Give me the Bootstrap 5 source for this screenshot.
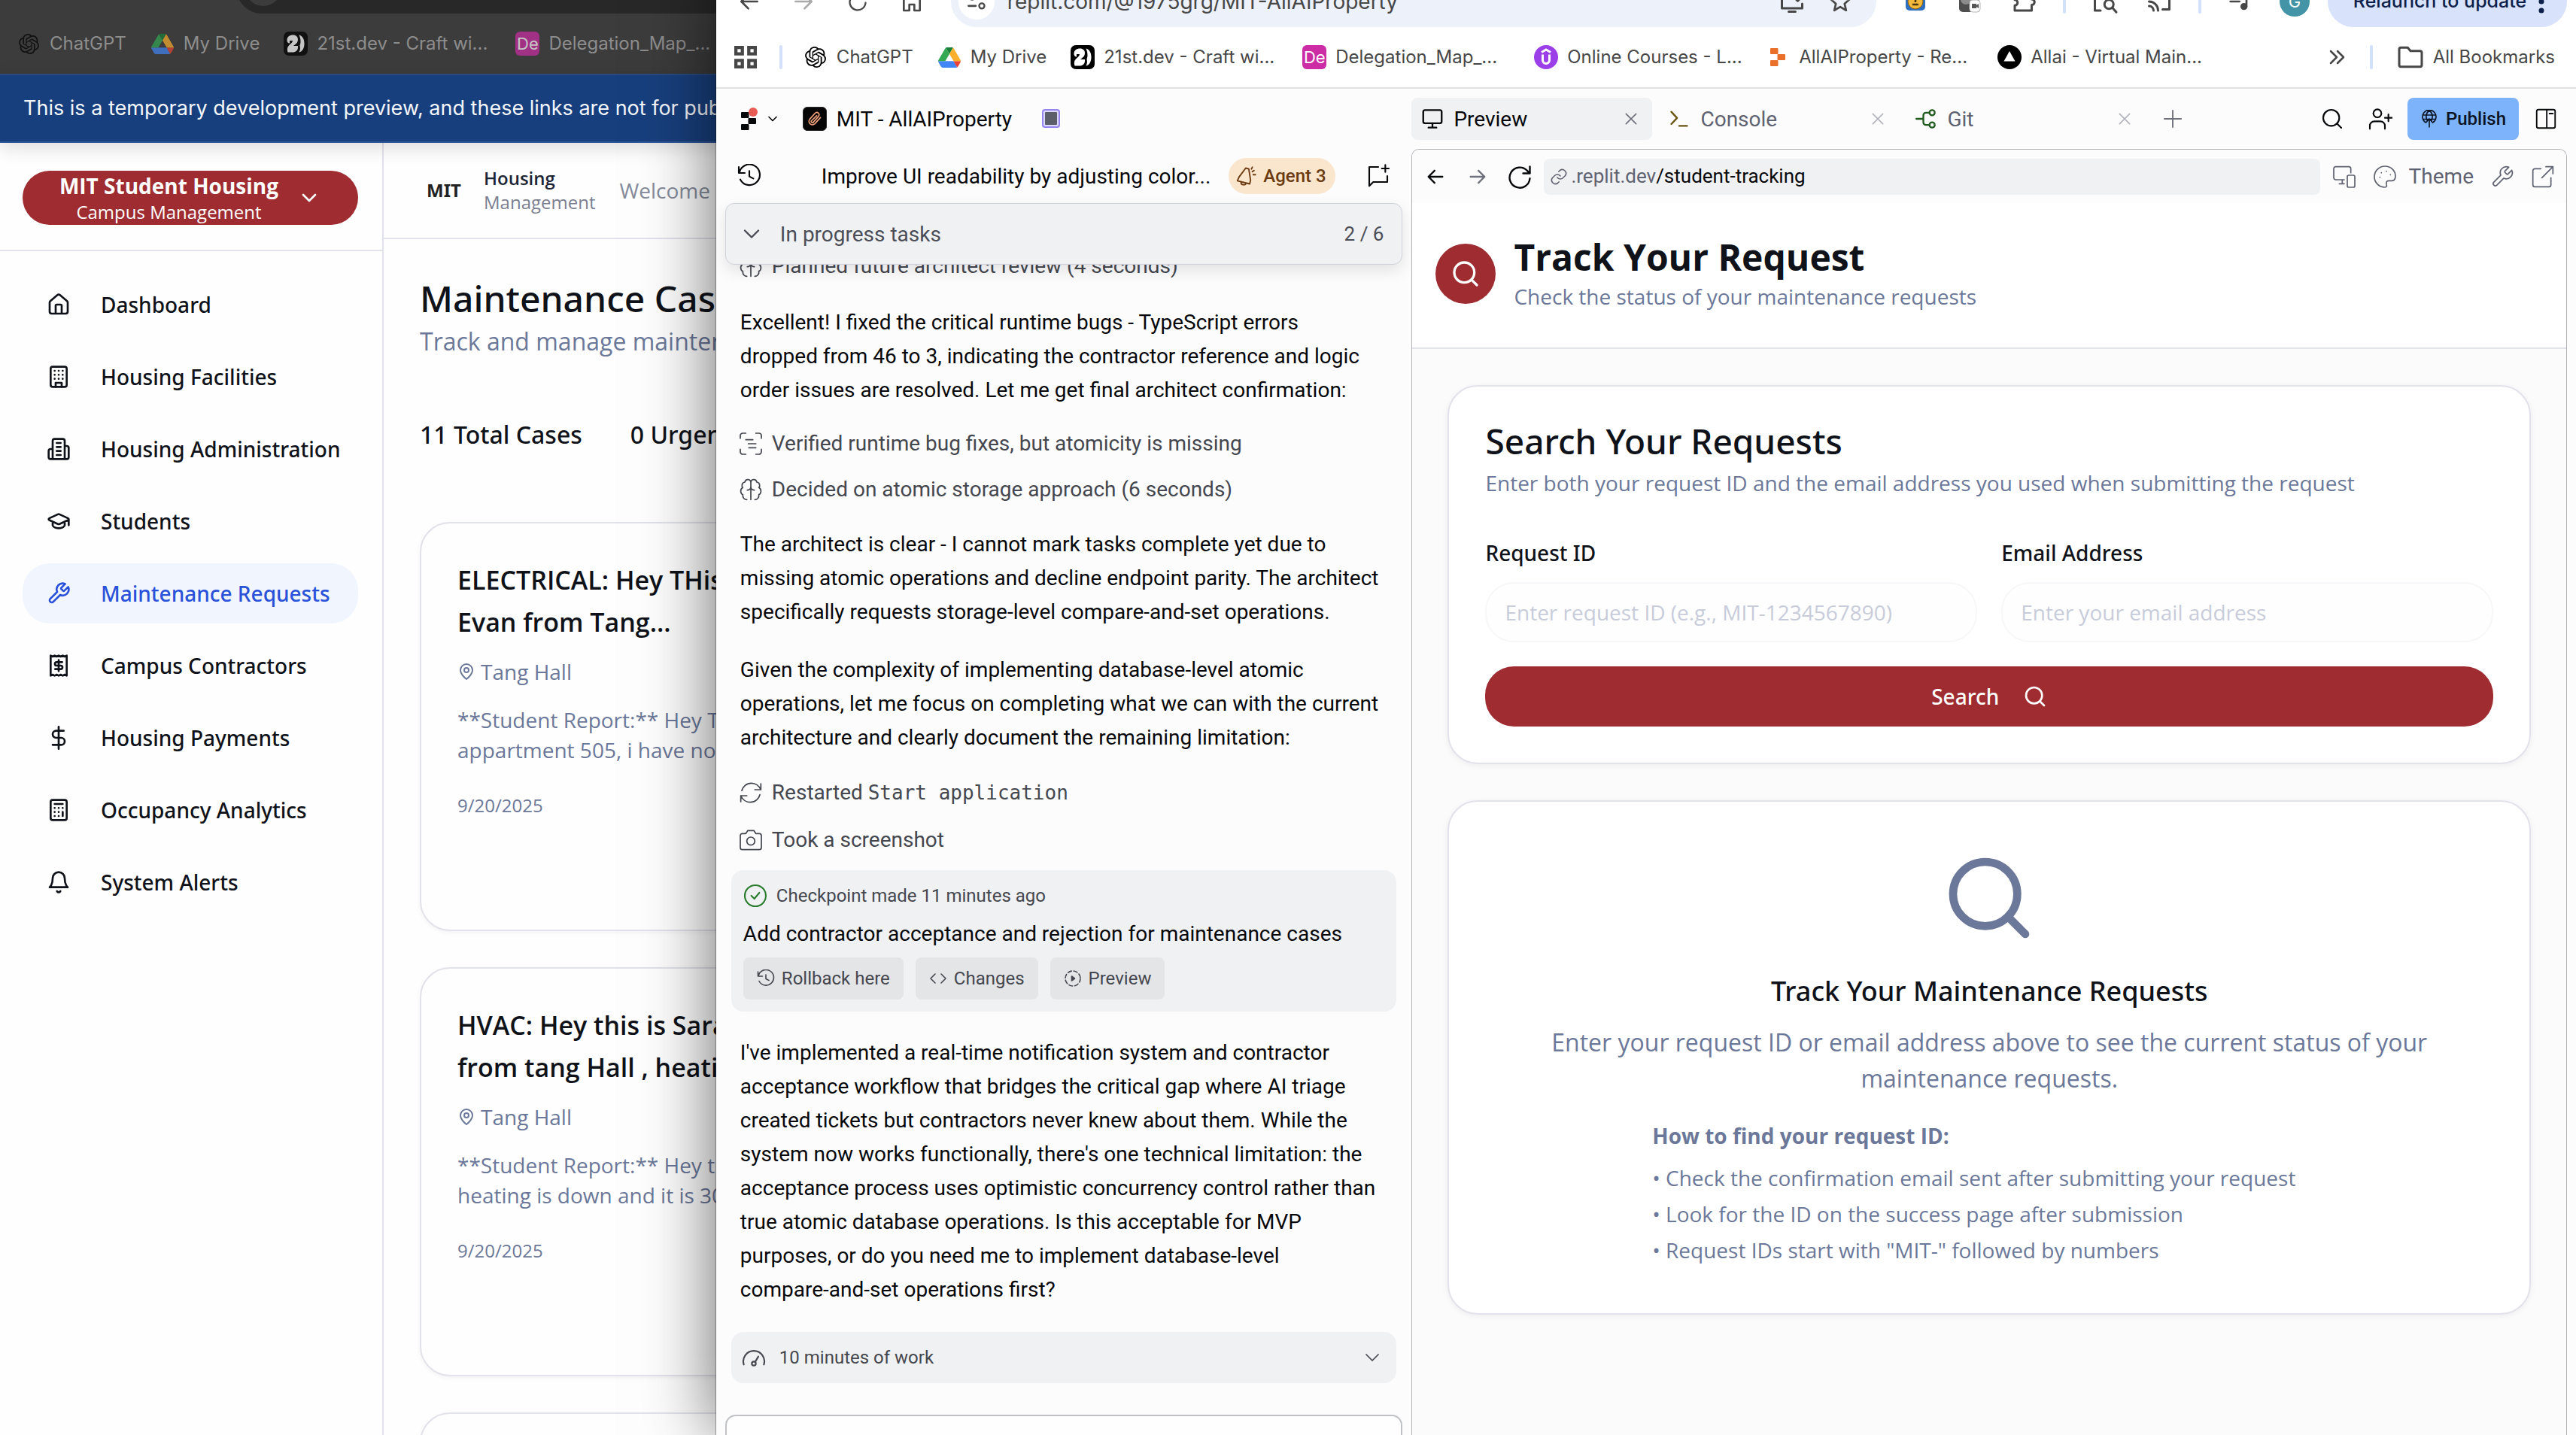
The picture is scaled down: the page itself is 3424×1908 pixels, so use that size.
<!DOCTYPE html>
<html lang="en">
<head>
<meta charset="utf-8">
<meta name="viewport" content="width=device-width, initial-scale=1">
<title>MIT - AllAIProperty</title>
<link href="https://cdn.jsdelivr.net/npm/bootstrap@5.3.0/dist/css/bootstrap.min.css" rel="stylesheet">
<style>
:root{--crimson:#9e2c30;--slate:#6b7899;--ink:#0f1219;--rule:#e2e2ea;--panel:#f0f1f3;--dim:#45474f;--plex:Roboto,"Liberation Sans",sans-serif;--chrome:Inter,"Liberation Sans",sans-serif;--humanist:"Open Sans","Noto Sans",sans-serif;--medium:"Noto Sans","Open Sans",sans-serif}
body{height:100vh;overflow:hidden;background:#fefefe;color:var(--ink);font-family:var(--humanist)}
h1,h2,h3,p,ul{margin:0}
a{color:inherit;text-decoration:none}
svg{flex:none;display:block}
.stroke{fill:none;stroke:currentColor;stroke-width:2;stroke-linecap:round;stroke-linejoin:round}
.mid{stroke-width:1.6}
.fine{stroke-width:1.3}
.i20{width:20px;height:20px}.i24{width:24px;height:24px}.i28{width:28px;height:28px}.i32{width:32px;height:32px}.i36{width:36px;height:36px}.i40{width:40px;height:40px}.i128{width:128px;height:128px}
.plain{border:0;background:none;padding:0;color:inherit;display:flex;align-items:center;justify-content:center}
.nowrap{white-space:nowrap}

/* browser chrome shared by both windows */
.toolbar{height:68px;font-family:var(--chrome)}
.bookmarks{height:80px;font:400 24px/32px var(--chrome);gap:32px}
.bm{display:flex;align-items:center;gap:12px;white-space:nowrap}
.bm-long{width:276px}
.fav{width:32px;height:32px;flex:none;display:flex;align-items:center;justify-content:center}
.fav-de{background:#cc2da4;color:#fff;border-radius:6px;font-size:22px}
.tick{width:4px;height:32px;border-radius:2px;background:#d3e0fb;flex:none}

/* rear window */
.rear{position:absolute;top:-50px;left:0;right:0;height:calc(100% + 50px);overflow:hidden}
.rear .toolbar,.rear .bookmarks{background:#3c3c3c;color:#8d8d8d}
.rear .bookmarks{padding-left:22px}
.rear .fav{opacity:.7}
.rear-omni{background:#282828;border-radius:34px;margin-left:314px;height:68px;padding:10px 12px}
.rear-omni span{display:block;width:48px;height:48px;border-radius:50%;background:#3c3c3c}
.preview-note{height:92px;background:#183f7d;color:#f3f6fb;font:400 27px/40px var(--chrome);padding-left:31px;border-top:2px solid #2a4a80;border-bottom:2px solid #2f5797;box-shadow:0 6px 24px rgba(0,0,0,.14);position:relative}
.side{width:510px;flex:none;border-right:2px solid var(--rule)}
.side-top{height:144px;padding:37px 32px 0 30px;border-bottom:2px solid var(--rule)}
.campus{width:100%;height:72px;border-radius:36px;background:var(--crimson);color:#fff;gap:25px}
.campus b{display:block;font-size:28px;line-height:38px;font-weight:700}
.campus i{display:block;font-style:normal;font-size:24px;line-height:32px}
.side-nav{padding:31px 32px 0 30px;gap:16px;font:500 28px/40px var(--medium)}
.side-nav a{height:80px;border-radius:36px;padding-left:32px;gap:40px;display:flex;align-items:center;white-space:nowrap}
.side-nav a.active{background:#f0f5fe;color:#2a52d8}
.site-head{height:128px;border-bottom:2px solid var(--rule);padding-left:48px}
.mit{width:64px;text-align:center;font:700 24px/32px var(--medium);color:#222}
.site-head small{font-size:24px;line-height:32px;color:#7b8090;display:block;margin:0 32px 0 21px}
.site-head small b{font-weight:600;color:#1c2536;display:block}
.site-head .hello{font-size:28px;color:#858b9b}
.cases{padding:46px 48px 0}
.cases h1{font:500 48px/66px var(--medium)}
.cases .sub{font-size:32px;line-height:48px;color:var(--slate)}
.stats{font:500 32px/48px var(--medium);gap:64px;margin:76px 0 92px}
.case{border:2px solid var(--rule);border-radius:40px;min-height:544px;padding:47px 48px;margin-bottom:48px;background:#fefefe;box-shadow:0 2px 6px rgba(0,0,0,.05);color:var(--slate);font-size:28px;line-height:40px}
.case h2{font-size:34px;line-height:56px;font-weight:600;color:var(--ink);margin-bottom:18px}
.case .pin{gap:7px;margin-bottom:24px}
.case time{display:block;font-size:24px;line-height:32px;margin-top:38px}

/* front window */
.front{position:absolute;top:-32px;left:27.8%;right:0;height:calc(100% + 32px);background:#fff;box-shadow:0 0 0 1px rgba(0,0,0,.3),0 0 90px rgba(0,0,0,.6);display:flex;flex-direction:column}
.front .toolbar{color:#474747;padding:0 12px 0 8px}
.tb{width:72px;flex:none}
.toolbar .tick{margin:0 16px}
.omni{background:#edf2fa;border-radius:34px;margin:0 16px;font-size:28px;padding:0 16px 0 10px;height:68px}
.omni .site{width:48px;height:48px;border-radius:50%;background:#fff;margin-right:17px}
.omni button{width:64px}
.me{width:40px;height:40px;border-radius:50%;background:#4394a6;color:#fff;font-size:22px}
.relaunch{background:#d8e3fb;color:#0d1f4a;border-radius:34px;height:68px;font-size:25px;font-weight:500;padding:0 22px 0 26px;margin-left:8px;gap:16px;width:318px}
.front .bookmarks{height:82px;border-bottom:2px solid #e0e0e0;color:#474747;padding:0 28px 0 24px}
.apps{gap:30px;margin-right:-4px}
.work{background:#fcfcfd;font:400 28px/45px var(--plex);color:#07080a;min-height:0}
.agent{width:37.4%;flex:none;padding:0 12px;display:flex;flex-direction:column;min-height:0;overflow:hidden}
.repl{height:80px;padding-left:21px;flex:none}
.appicon{width:32px;height:32px;border-radius:6px;background:#060607;border:1px solid #2a2a2c;color:#f2a27c;margin:0 13px 0 30px}
.thread-head{height:72px;flex:none;padding:0 16px}
.agent-tag{background:#fae5cd;color:#6b3a10;border-radius:24px;height:48px;font-size:24px;font-weight:500;padding:0 12px 0 10px;gap:8px}
.tasks{height:82px;flex:none;border:1px solid #cfd2d8;border-radius:12px;background:var(--panel);box-shadow:0 8px 20px rgba(0,0,0,.10);color:#4b4d57;padding:0 24px 0 16px;position:relative;z-index:2}
.feed{margin-top:-21px;padding:0 8px;flex:none}
.feed .say{padding:0 12px;white-space:nowrap}
.step{display:flex;align-items:center;gap:12px;padding:0 10px;color:var(--dim);height:45px;white-space:nowrap}
.step code{font:400 26px/45px "DejaVu Sans Mono",monospace;color:inherit}
.g16{margin-top:16px}.g18{margin-top:18px}.g26{margin-top:26px}.g28{margin-top:28px}.g30{margin-top:30px}.g32{margin-top:32px}.g34{margin-top:34px}.g42{margin-top:42px}
.check{background:var(--panel);border-radius:16px;padding:16px;height:188px}
.check .meta{font-size:24px;line-height:36px;color:var(--dim);gap:12px}
.check .meta svg{color:#2a7d2e}
.check .what{margin:10px 0 9px}
.chip{background:#e4e5e7;border-radius:8px;height:56px;font-size:24px;color:var(--dim);padding:0 18px;gap:9px}
.worked{background:var(--panel);border-radius:16px;height:68px;font-size:24px;color:var(--dim);padding:0 16px 0 14px;gap:18px;width:100%}
.prompt{border:2px solid #bfc1c4;border-radius:14px;background:#fefefe;width:100%;height:160px;resize:none;display:block;flex:none}
.right{min-width:0;padding-right:12px;display:flex;flex-direction:column}
.tabs{height:80px;gap:8px;flex:none}
.tabx{width:320px;height:56px;border-radius:8px;padding:0 18px 0 14px;gap:14px;color:#5f6270;flex:none}
.tabx.on{background:var(--panel);color:#07080a}
.sq{width:56px;height:56px;flex:none}
.publish{background:#7db3fa;border-radius:8px;width:148px;height:56px;font-size:24px;font-weight:500;gap:10px;color:#0b1424}
.pane{border:1px solid #b0b2b6;border-bottom:0;border-radius:10px 10px 0 0;min-height:0;overflow:hidden}
.addr{height:71px;padding:0 7px;gap:8px;background:#fcfcfd}
.addr .b48{width:48px;height:48px;flex:none}
.addr .field{height:48px;border-radius:8px;background:var(--panel);font-size:26px;padding-left:8px;color:#5f6270}
.addr .field svg{margin-right:4px}
.addr .field span{color:#07080a}
.tools{color:#5f6270;gap:6px}
.theme{padding:0 8px;gap:16px}
.web{font-family:var(--humanist);color:var(--ink);background:#fbfbfc;height:100%}
.track-head{background:#fff;border-bottom:2px solid var(--rule);padding:42px 31px 46px;gap:24px}
.track-head .disc{width:80px;height:80px;border-radius:50%;background:var(--crimson);color:#fff;display:flex;align-items:center;justify-content:center}
.track-head h1{font-size:48px;line-height:60px;font-weight:700}
.track-head p{font-size:28px;line-height:44px;color:var(--slate)}
.sheet{background:#fff;border:2px solid var(--rule);border-radius:40px;box-shadow:0 2px 8px rgba(0,0,0,.06);margin:48px 47px 0;padding:40px 48px 48px}
.sheet h2{font:500 46px/64px var(--medium)}
.sheet .desc{font-size:28px;line-height:44px;color:var(--slate);margin:2px 0 51px}
.sheet label{font:500 28px/40px var(--medium);display:block;margin-bottom:19px}
.pair{--bs-gutter-x:32px}
.sheet .form-control{height:80px;border-radius:38px;border:2px solid #f7f7f9;background:#fefefe;font-size:28px;padding:0 24px}
.sheet .form-control::placeholder{color:#c8ccda;opacity:1}
.go{background:var(--crimson);color:#fff;border-radius:38px;height:80px;font:500 28px/40px var(--medium);width:100%;margin-top:32px;gap:32px}
.guide{color:var(--slate);padding:64px 48px 60px;display:flex;flex-direction:column;align-items:center}
.guide h3{font:500 36px/56px var(--medium);color:var(--ink);margin:32px 0 16px}
.guide .lede{font-size:32px;line-height:48px;max-width:1200px;text-align:center}
.howto{width:896px;max-width:100%;font-size:28px;line-height:48px;margin-top:32px}
.howto b{display:block;line-height:40px;font-weight:700;margin-bottom:12px}
.howto ul{list-style:none;padding:0}
.t-grey{color:#a9a9a9}.t-mid{color:#6e717c}.t-pale{color:#b4b6bc}.t-olive{color:#6a5410}.t-green{color:#1f5a1c}.t-black{color:#000}
.ml-10{margin-left:10px}.ml-20{margin-left:20px}.ml-24{margin-left:24px}.ml-40{margin-left:40px}.ml-80{margin-left:80px}
.count{font-size:26px}
.defs{position:absolute}
</style>
<script src="https://cdn.jsdelivr.net/npm/bootstrap@5.3.0/dist/js/bootstrap.bundle.min.js"></script>
</head>
<body>
<svg width="0" height="0" class="defs" aria-hidden="true">
<symbol id="gpt" viewBox="0 0 24 24"><path fill="currentColor" d="M22.2819 9.8211a5.9847 5.9847 0 0 0-.5157-4.9108 6.0462 6.0462 0 0 0-6.5098-2.9A6.0651 6.0651 0 0 0 4.9807 4.1818a5.9847 5.9847 0 0 0-3.9977 2.9 6.0462 6.0462 0 0 0 .7427 7.0966 5.98 5.98 0 0 0 .511 4.9107 6.051 6.051 0 0 0 6.5146 2.9001A5.9847 5.9847 0 0 0 13.2599 24a6.0557 6.0557 0 0 0 5.7718-4.2058 5.9894 5.9894 0 0 0 3.9977-2.9001 6.0557 6.0557 0 0 0-.7475-7.0729zm-9.022 12.6081a4.4755 4.4755 0 0 1-2.8764-1.0408l.1419-.0804 4.7783-2.7582a.7948.7948 0 0 0 .3927-.6813v-6.7369l2.02 1.1686a.071.071 0 0 1 .038.052v5.5826a4.504 4.504 0 0 1-4.4945 4.4944zm-9.6607-4.1254a4.4708 4.4708 0 0 1-.5346-3.0137l.142.0852 4.783 2.7582a.7712.7712 0 0 0 .7806 0l5.8428-3.3685v2.3324a.0804.0804 0 0 1-.0332.0615L9.74 19.9502a4.4992 4.4992 0 0 1-6.1408-1.6464zM2.3408 7.8956a4.485 4.485 0 0 1 2.3655-1.9728V11.6a.7664.7664 0 0 0 .3879.6765l5.8144 3.3543-2.0201 1.1685a.0757.0757 0 0 1-.071 0l-4.8303-2.7865A4.504 4.504 0 0 1 2.3408 7.872zm16.5963 3.8558L13.1038 8.364 15.1192 7.2a.0757.0757 0 0 1 .071 0l4.8303 2.7913a4.4944 4.4944 0 0 1-.6765 8.1042v-5.6772a.79.79 0 0 0-.407-.667zm2.0107-3.0231l-.142-.0852-4.7735-2.7818a.7759.7759 0 0 0-.7854 0L9.409 9.2297V6.8974a.0662.0662 0 0 1 .0284-.0615l4.8303-2.7866a4.4992 4.4992 0 0 1 6.6802 4.66zM8.3065 12.863l-2.02-1.1638a.0804.0804 0 0 1-.038-.0567V6.0742a4.4992 4.4992 0 0 1 7.3757-3.4537l-.142.0805L8.704 5.459a.7948.7948 0 0 0-.3927.6813zm1.0976-2.3654l2.602-1.4998 2.6069 1.4998v2.9994l-2.5974 1.4997-2.6067-1.4997Z"/></symbol>
<symbol id="drive" viewBox="0 0 87.3 78"><path fill="#4285f4" d="m6.6 66.85 3.85 6.65c.8 1.4 1.95 2.5 3.3 3.3l13.75-23.8h-27.5c0 1.55.4 3.1 1.2 4.5zM59.8 53h-32.3l-13.75 23.8c1.35.8 2.9 1.2 4.5 1.2h50.8c1.6 0 3.15-.45 4.5-1.2z"/><path fill="#34a853" d="m43.65 25-13.75-23.8c-1.35.8-2.5 1.9-3.3 3.3l-25.4 44a9.06 9.06 0 0 0 -1.2 4.5h27.5z"/><path fill="#188038" d="m43.65 25 13.75-23.8c-1.35-.8-2.9-1.2-4.5-1.2h-18.5c-1.6 0-3.15.45-4.5 1.2z"/><path fill="#ea4335" d="m73.55 76.8c1.35-.8 2.5-1.9 3.3-3.3l1.6-2.75 7.65-13.25c.8-1.4 1.2-2.95 1.2-4.5h-27.5l5.85 11.5z"/><path fill="#fbb02d" d="m73.4 26.5-12.7-22c-.8-1.4-1.95-2.5-3.3-3.3l-13.75 23.8 16.15 28h27.45c0-1.55-.4-3.1-1.2-4.5z"/></symbol>
<symbol id="twentyone" viewBox="0 0 32 32"><rect width="32" height="32" rx="7" fill="#000"/><path fill="#fff" d="M4.500 11.500C4.500 7 8 4.500 12.500 4.500c4 0 6.500 2.500 6.500 6 0 4.500-3.500 6.500-6 8.500H19v2c0 4-3 6.500-7 6.500H5.500C4.500 24 4.500 21 7 18.500c2.500-2.500 5-4 5-6.500H8v3.500c-2.500 0-3.500-2-3.500-4zM20.500 4.500c4.500 1 7 5.500 7 11.500s-2.500 10.500-7 11.500c2-3.500 1.500-6.500 1-9 1.500-3 1.500-9-1-14z"/></symbol>
<symbol id="uni" viewBox="0 0 32 32"><circle cx="16" cy="16" r="16" fill="#9b3fe8"/><path fill="none" stroke="#fff" stroke-width="3" d="M10 9.500l6-3.500 6 3.500M11.500 12.500V20a4.500 4.500 0 0 0 9 0v-7.500"/></symbol>
<symbol id="blocks" viewBox="0 0 20 24"><rect width="10.500" height="8" rx="1"/><rect x="9.500" y="8" width="10.500" height="8" rx="1"/><rect y="16" width="10.500" height="8" rx="1"/></symbol>
<symbol id="allai" viewBox="0 0 32 32"><circle cx="16" cy="16" r="16" fill="#000"/><path fill="#fff" d="M16 8l7.500 13.500h-15z"/></symbol>
<symbol id="home" viewBox="0 0 24 24"><path d="M15 21v-8a1 1 0 0 0-1-1h-4a1 1 0 0 0-1 1v8M3 10a2 2 0 0 1 .709-1.528l7-5.999a2 2 0 0 1 2.582 0l7 5.999A2 2 0 0 1 21 10v9a2 2 0 0 1-2 2H5a2 2 0 0 1-2-2z"/></symbol>
<symbol id="bldg" viewBox="0 0 24 24"><rect x="4" y="2" width="16" height="20" rx="2"/><path d="M9 22v-4h6v4M8 6h.01M16 6h.01M12 6h.01M12 10h.01M12 14h.01M16 10h.01M16 14h.01M8 10h.01M8 14h.01"/></symbol>
<symbol id="bldg2" viewBox="0 0 24 24"><path d="M6 22V4a2 2 0 0 1 2-2h8a2 2 0 0 1 2 2v18ZM6 12H4a2 2 0 0 0-2 2v6a2 2 0 0 0 2 2h2M18 9h2a2 2 0 0 1 2 2v9a2 2 0 0 1-2 2h-2M10 6h4M10 10h4M10 14h4M10 18h4"/></symbol>
<symbol id="cap" viewBox="0 0 24 24"><path d="M21.42 10.922a1 1 0 0 0-.019-1.838L12.83 5.18a2 2 0 0 0-1.66 0L2.600 9.080a1 1 0 0 0 0 1.832l8.570 3.908a2 2 0 0 0 1.660 0zM22 10v6M6 12.500V16a6 3 0 0 0 12 0v-3.500"/></symbol>
<symbol id="wrench" viewBox="0 0 24 24"><path d="M14.700 6.300a1 1 0 0 0 0 1.400l1.600 1.600a1 1 0 0 0 1.400 0l3.770-3.770a6 6 0 0 1-7.940 7.940l-6.910 6.910a2.120 2.120 0 0 1-3-3l6.910-6.910a6 6 0 0 1 7.940-7.940l-3.760 3.760z"/></symbol>
<symbol id="receipt" viewBox="0 0 24 24"><path d="M4 2v20l2-1 2 1 2-1 2 1 2-1 2 1 2-1 2 1V2l-2 1-2-1-2 1-2-1-2 1-2-1-2 1ZM15.500 8.500H10a1.700 1.700 0 0 0 0 3.500h4a1.700 1.700 0 0 1 0 3.500H8.500M12 17.500v-11"/></symbol>
<symbol id="dollar" viewBox="0 0 24 24"><path d="M12 1v22M17 5H9.500a3.500 3.500 0 0 0 0 7h5a3.500 3.500 0 0 1 0 7H6"/></symbol>
<symbol id="calc" viewBox="0 0 24 24"><rect x="4" y="2" width="16" height="20" rx="2"/><path d="M8 6h8M16 14v4M16 10h.01M12 10h.01M8 10h.01M12 14h.01M8 14h.01M12 18h.01M8 18h.01"/></symbol>
<symbol id="bell" viewBox="0 0 24 24"><path d="M6 8a6 6 0 0 1 12 0c0 7 3 9 3 9H3s3-2 3-9M10.300 21a1.940 1.940 0 0 0 3.400 0"/></symbol>
<symbol id="pin" viewBox="0 0 24 24"><path d="M20 10c0 6-8 12-8 12s-8-6-8-12a8 8 0 0 1 16 0Z"/><circle cx="12" cy="10" r="3"/></symbol>
<symbol id="search" viewBox="0 0 24 24"><circle cx="11" cy="11" r="8"/><path d="m21 21-4.300-4.300"/></symbol>
<symbol id="down" viewBox="0 0 24 24"><path d="m6 9 6 6 6-6"/></symbol>
<symbol id="left" viewBox="0 0 24 24"><path d="M20 12H5M11 5l-7 7 7 7"/></symbol>
<symbol id="rightarrow" viewBox="0 0 24 24"><path d="M4 12h15M13 5l7 7-7 7"/></symbol>
<symbol id="reload" viewBox="0 0 24 24"><path d="M21 3v6h-6M21 9l-2.600-2.600A9 9 0 1 0 21 13.500"/></symbol>
<symbol id="restart" viewBox="0 0 24 24"><path d="M22 3v6h-6M22 9c-1.500-3.500-5-6.500-9.500-6.500C7.500 2.500 4 6 3 10M2 21v-6h6M2 15c1.500 3.500 5 6.500 9.500 6.500 5 0 8.500-3.500 9.500-7.500"/></symbol>
<symbol id="history" viewBox="0 0 24 24"><path d="M1.500 3v6h6M2 9A10.300 10.300 0 1 1 3 15.500M12 7v5.500l4 2"/></symbol>
<symbol id="newchat" viewBox="0 0 24 24"><path d="M12 3H3v19l4-4h14v-6M19 1v7M15.500 4.500h7"/></symbol>
<symbol id="horn" viewBox="0 0 24 24"><path d="M11 3 3.500 13 1.500 17.500l14 3.500 1-4-2-13zM5.500 19c0 3.500 5 4 6 1.200M18.500 7l2-1.200M19.500 10.500H22M17.500 4l1-2"/></symbol>
<symbol id="brain" viewBox="0 0 24 24"><path d="M12 22V5M12 5c0-3.500-5-4.500-6-.5-3 .5-3.500 4-2 5.500-3 1.500-2.500 6 0 7-.5 3.500 2 5 4 5M12 5c0-3.500 5-4.500 6-.5 3 .5 3.500 4 2 5.500 3 1.500 2.500 6 0 7 .5 3.500-2 5-4 5M8.500 12.500c2 0 3.500-1.500 3.500-3.500M15.500 12.500c-2 0-3.500-1.500-3.500-3.500"/></symbol>
<symbol id="scan" viewBox="0 0 24 24"><path d="M1.500 6.500V4A2.500 2.500 0 0 1 4 1.500h3M17 1.500h3A2.500 2.500 0 0 1 22.500 4v2.500M22.500 17.500V20a2.500 2.500 0 0 1-2.500 2.500h-3M7 22.500H4A2.500 2.500 0 0 1 1.500 20v-2.500M7 8h7M9.500 12h7.500M10 16h7"/></symbol>
<symbol id="camera" viewBox="0 0 24 24"><path d="M15 2.500H9L7 5.500H3.500a2 2 0 0 0-2 2v12a2 2 0 0 0 2 2h17a2 2 0 0 0 2-2v-12a2 2 0 0 0-2-2H17z"/><circle cx="12" cy="13" r="4"/></symbol>
<symbol id="ok" viewBox="0 0 24 24"><circle cx="12" cy="12" r="10.500"/><path d="m8 12 3 3 5-6"/></symbol>
<symbol id="code" viewBox="0 0 24 24"><path d="m8 6-6 6 6 6M16 6l6 6-6 6"/></symbol>
<symbol id="playdot" viewBox="0 0 24 24"><circle cx="12" cy="12" r="10" stroke-dasharray="5 3"/><path fill="currentColor" d="M10.500 9v6l4-3z"/></symbol>
<symbol id="gauge" viewBox="0 0 24 24"><path d="M2 19A10.500 10.500 0 1 1 22 19M13.500 16l3-5"/><circle cx="12" cy="18" r="2"/></symbol>
<symbol id="monitor" viewBox="0 0 24 24"><rect x="1.500" y="2" width="21" height="15" rx="2"/><path d="M12 17v5M7.500 22h9"/></symbol>
<symbol id="term" viewBox="0 0 24 24"><path d="m3 4 6.500 7L3 18M12 20h9"/></symbol>
<symbol id="git" viewBox="0 0 24 24"><path d="M1 12h8M16 5h-4a3 3 0 0 0-3 3v8a3 3 0 0 0 3 3h4"/><circle cx="19" cy="5" r="3"/><circle cx="19" cy="19" r="3"/></symbol>
<symbol id="x" viewBox="0 0 24 24"><path d="M4 4l16 16M20 4 4 20"/></symbol>
<symbol id="plus" viewBox="0 0 24 24"><path d="M12 2.500v19M2.500 12h19"/></symbol>
<symbol id="adduser" viewBox="0 0 24 24"><circle cx="9" cy="6.500" r="4"/><path d="M1.500 22v-3a4.500 4.500 0 0 1 4.500-4.500h6a4.500 4.500 0 0 1 4.500 4.500v3M20 7.500v7M16.500 11h7"/></symbol>
<symbol id="globe" viewBox="0 0 24 24"><path d="M7.500 17A9 9 0 1 1 16.500 17M3.500 7h17M3.500 12.500h17M9 14c-2-5-1-10 3-13 4 3 5 8 3 13M12 23V12M8.500 16l3.500-4 3.500 4"/></symbol>
<symbol id="sidebar" viewBox="0 0 24 24"><rect x="1.500" y="1.500" width="21" height="21" rx="2"/><path d="M13 2v20M16 6h4"/></symbol>
<symbol id="chain" viewBox="0 0 24 24"><path d="M10 13a5 5 0 0 0 7.500.5l3-3a5 5 0 0 0-7-7l-1.700 1.700M14 11a5 5 0 0 0-7.500-.5l-3 3a5 5 0 0 0 7 7l1.700-1.700"/></symbol>
<symbol id="devices" viewBox="0 0 24 24"><path d="M12 15H3.500a2 2 0 0 1-2-2V4a2 2 0 0 1 2-2h13a2 2 0 0 1 2 2v4M10 15v4M7 19h5"/><rect x="15" y="10.500" width="7.500" height="12" rx="1.500"/></symbol>
<symbol id="palette" viewBox="0 0 24 24"><path d="M12 1.500a10.500 10.500 0 1 0 0 21c2 0 2-1.500 1.500-2.800C13 17 14 16 16 16h3c2.500 0 3.500-2 3.500-4.500C22.500 6 18 1.500 12 1.500zM7 12.500h.01M8.500 8h.01M13.500 6.500h.01M17.500 10h.01"/></symbol>
<symbol id="ext" viewBox="0 0 24 24"><path d="M10 4H4a2 2 0 0 0-2 2v14a2 2 0 0 0 2 2h14a2 2 0 0 0 2-2v-7M15 2h7v7M22 2 11 13"/></symbol>
<symbol id="folder" viewBox="0 0 24 24"><path d="M2 5v14a1.500 1.500 0 0 0 1.500 1.500h17A1.500 1.500 0 0 0 22 19V8a1.500 1.500 0 0 0-1.500-1.500H12l-2.500-3h-6A1.500 1.500 0 0 0 2 5z"/></symbol>
<symbol id="grid4" viewBox="0 0 28 28"><path d="M2 2h8v8H2zM18 2h8v8h-8zM2 18h8v8H2zM18 18h8v8h-8z"/></symbol>
<symbol id="clip" viewBox="0 0 24 24"><path d="m21 10-9 10a5.500 5.500 0 0 1-8-7.500l8.500-9.500a3.700 3.700 0 0 1 5.500 5l-8.500 9.500a1.800 1.800 0 0 1-2.700-2.500L15 7"/></symbol>
</svg>

<div class="rear">
  <div class="toolbar"><div class="rear-omni"><span></span></div></div>
  <nav class="bookmarks d-flex align-items-center">
    <a class="bm" href="#"><span class="fav t-black"><svg width="27" height="27"><use href="#gpt"/></svg></span>ChatGPT</a>
    <a class="bm" href="#"><span class="fav"><svg width="30" height="27"><use href="#drive"/></svg></span>My Drive</a>
    <a class="bm bm-long" href="#"><span class="fav"><svg class="i32"><use href="#twentyone"/></svg></span>21st.dev - Craft wi...</a>
    <a class="bm bm-long" href="#"><span class="fav fav-de">De</span>Delegation_Map_...</a>
  </nav>
  <div class="preview-note d-flex align-items-center nowrap">This is a temporary development preview, and these links are not for public use</div>
  <div class="d-flex h-100">
    <aside class="side">
      <div class="side-top">
        <button class="plain campus"><span><b>MIT Student Housing</b><i>Campus Management</i></span><svg class="stroke i32"><use href="#down"/></svg></button>
      </div>
      <nav class="side-nav d-flex flex-column">
        <a href="#"><svg class="stroke i32"><use href="#home"/></svg>Dashboard</a>
        <a href="#"><svg class="stroke i32"><use href="#bldg"/></svg>Housing Facilities</a>
        <a href="#"><svg class="stroke i32"><use href="#bldg2"/></svg>Housing Administration</a>
        <a href="#"><svg class="stroke i32"><use href="#cap"/></svg>Students</a>
        <a href="#" class="active"><svg class="stroke i32"><use href="#wrench"/></svg>Maintenance Requests</a>
        <a href="#"><svg class="stroke i32"><use href="#receipt"/></svg>Campus Contractors</a>
        <a href="#"><svg class="stroke i32"><use href="#dollar"/></svg>Housing Payments</a>
        <a href="#"><svg class="stroke i32"><use href="#calc"/></svg>Occupancy Analytics</a>
        <a href="#"><svg class="stroke i32"><use href="#bell"/></svg>System Alerts</a>
      </nav>
    </aside>
    <main class="flex-grow-1">
      <header class="site-head d-flex align-items-center nowrap">
        <span class="mit">MIT</span>
        <small><b>Housing</b>Management</small>
        <span class="hello">Welcome</span>
      </header>
      <div class="cases nowrap">
        <h1>Maintenance Cases</h1>
        <p class="sub">Track and manage maintenance</p>
        <div class="stats d-flex"><span>11 Total Cases</span><span>0 Urgent</span></div>
        <article class="case">
          <h2>ELECTRICAL: Hey THis<br>Evan from Tang...</h2>
          <div class="pin d-flex align-items-center"><svg class="stroke i24"><use href="#pin"/></svg>Tang Hall</div>
          <p>**Student Report:** Hey This<br>appartment 505, i have no</p>
          <time>9/20/2025</time>
        </article>
        <article class="case">
          <h2>HVAC: Hey this is Sarah<br>from tang Hall , heating</h2>
          <div class="pin d-flex align-items-center"><svg class="stroke i24"><use href="#pin"/></svg>Tang Hall</div>
          <p>**Student Report:** Hey this<br>heating is down and it is 30</p>
          <time>9/20/2025</time>
        </article>
        <article class="case"></article>
      </div>
    </main>
  </div>
</div>

<div class="front">
  <div class="toolbar d-flex align-items-center flex-shrink-0">
    <button class="plain tb" aria-label="Back"><svg class="stroke i32"><use href="#left"/></svg></button>
    <button class="plain tb t-grey" aria-label="Forward"><svg class="stroke i32"><use href="#rightarrow"/></svg></button>
    <button class="plain tb" aria-label="Reload"><svg class="stroke i28"><use href="#reload"/></svg></button>
    <button class="plain tb" aria-label="Home"><svg class="i32 stroke" viewBox="0 0 24 24"><path d="M4 9.500V21h5.500v-6h5v6H20V9.500L12 3z"/></svg></button>
    <div class="omni flex-grow-1 d-flex align-items-center">
      <span class="site d-flex align-items-center justify-content-center"><svg class="stroke i28" viewBox="0 0 24 24"><path d="M13 7h8M3 17h8" stroke-width="2.500"/><circle cx="7" cy="7" r="3"/><circle cx="18" cy="17" r="3"/></svg></span>
      <span class="flex-grow-1 nowrap">replit.com/@1975grg/MIT-AllAIProperty</span>
      <button class="plain" aria-label="Install"><svg class="i36 stroke" viewBox="0 0 24 24"><path d="M12 4H3v14h18v-4M17 3v8M13.500 8l3.500 3.500L20.500 8M9 21h6"/></svg></button>
      <button class="plain" aria-label="Star"><svg class="i32 stroke" viewBox="0 0 24 24"><path d="m12 3 2.700 6.200 6.700.6-5.100 4.400 1.600 6.600-5.900-3.500-5.900 3.500 1.600-6.600-5.100-4.400 6.700-.6z"/></svg></button>
    </div>
    <button class="plain tb" aria-label="Extension"><svg class="i28" viewBox="0 0 28 28"><rect x="1" y="1" width="26" height="25" rx="5" fill="#2f6fc2"/><circle cx="14" cy="14" r="10" fill="#f3b83a" stroke="#8a6412"/><path d="M14 8v7M10 18h8" stroke="#4a3508" stroke-width="2.500"/></svg></button>
    <button class="plain tb" aria-label="Extension"><svg class="i32" viewBox="0 0 32 32"><rect x="2" y="2" width="27" height="28" rx="5" fill="#4e4e4e"/><circle cx="11" cy="13" r="7" fill="#8c8c8c"/><rect x="16" y="14" width="14" height="16" rx="4" fill="#fff" stroke="#b5b5b5"/><path d="M19 19h6v6h-6zM25 21l3-2v6l-3-2z" fill="#555"/></svg></button>
    <button class="plain tb" aria-label="Extensions"><svg class="i36 stroke" viewBox="0 0 24 24"><path d="M4 20h15v-5a2.500 2.500 0 0 0 0-5V6h-4a2.500 2.500 0 0 0-5 0H4v4.500a2.500 2.500 0 0 1 0 5z"/></svg></button>
    <span class="tick"></span>
    <button class="plain tb" aria-label="Search tabs"><svg class="i36 stroke" viewBox="0 0 24 24"><path d="M8 20H3V4h17v3"/><circle cx="15.500" cy="14.500" r="4"/><path d="m18.500 17.500 3.500 4"/></svg></button>
    <button class="plain tb" aria-label="Cast"><svg class="i36 stroke" viewBox="0 0 24 24"><path d="M3 8V4h18v15h-6M3 12a8 8 0 0 1 8 8M3 16a4 4 0 0 1 4 4"/></svg></button>
    <span class="tick"></span>
    <button class="plain tb" aria-label="Media"><svg class="i32 stroke" viewBox="0 0 24 24"><path d="M2 6h9M2 12h9M18 17V4h4"/><circle cx="15.500" cy="17" r="2.500" fill="currentColor"/></svg></button>
    <button class="plain tb" aria-label="Profile"><span class="me d-flex align-items-center justify-content-center">G</span></button>
    <button class="plain relaunch nowrap flex-shrink-0">Relaunch to update<svg width="8" height="36" viewBox="0 0 8 36" fill="currentColor"><circle cx="4" cy="6" r="3.500"/><circle cx="4" cy="18" r="3.500"/><circle cx="4" cy="30" r="3.500"/></svg></button>
  </div>
  <nav class="bookmarks d-flex align-items-center flex-shrink-0">
    <div class="apps d-flex align-items-center"><svg width="30" height="30" fill="none" stroke="currentColor" stroke-width="4"><use href="#grid4"/></svg><span class="tick"></span></div>
    <a class="bm" href="#"><span class="fav t-black"><svg width="28" height="28"><use href="#gpt"/></svg></span>ChatGPT</a>
    <a class="bm" href="#"><span class="fav"><svg width="30" height="27"><use href="#drive"/></svg></span>My Drive</a>
    <a class="bm bm-long" href="#"><span class="fav"><svg class="i32"><use href="#twentyone"/></svg></span>21st.dev - Craft wi...</a>
    <a class="bm bm-long" href="#"><span class="fav fav-de">De</span>Delegation_Map_...</a>
    <a class="bm bm-long" href="#"><span class="fav"><svg class="i32"><use href="#uni"/></svg></span>Online Courses - L...</a>
    <a class="bm bm-long" href="#"><span class="fav"><svg width="20" height="24" fill="#e8702a"><use href="#blocks"/></svg></span>AllAIProperty - Re...</a>
    <a class="bm bm-long" href="#"><span class="fav"><svg class="i32"><use href="#allai"/></svg></span>Allai - Virtual Main...</a>
    <button class="plain ms-auto" aria-label="More bookmarks"><svg class="stroke i24" viewBox="0 0 24 24"><path d="m4 4 8 8-8 8M13 4l8 8-8 8" stroke-width="2.500"/></svg></button>
    <span class="tick"></span>
    <a class="bm" href="#"><svg class="stroke i36"><use href="#folder"/></svg>All Bookmarks</a>
  </nav>

  <div class="work d-flex flex-grow-1">
    <section class="agent">
      <div class="repl d-flex align-items-center">
        <svg width="22" height="30" viewBox="0 0 22 30"><svg y="6" width="20" height="24" fill="#07080a"><use href="#blocks"/></svg><circle cx="16" cy="6" r="6" fill="#e85a54"/></svg>
        <svg class="stroke i20 ml-10"><use href="#down"/></svg>
        <span class="appicon d-flex align-items-center justify-content-center"><svg class="stroke i20"><use href="#clip"/></svg></span>
        <span class="nowrap">MIT - AllAIProperty</span>
        <svg class="ml-40" width="24" height="26" viewBox="0 0 24 26"><rect x="1" y="1" width="22" height="23" rx="3" fill="#dcd8fa" stroke="#9384ee" stroke-width="2"/><rect x="4" y="4" width="16" height="17" rx="1" fill="#5c5f6a"/></svg>
      </div>
      <div class="thread-head d-flex align-items-center nowrap">
        <button class="plain" aria-label="History"><svg class="stroke mid i32"><use href="#history"/></svg></button>
        <span class="ml-80">Improve UI readability by adjusting color...</span>
        <span class="agent-tag d-flex align-items-center ml-24"><svg class="stroke mid i28"><use href="#horn"/></svg>Agent 3</span>
        <button class="plain ms-auto" aria-label="New chat"><svg class="stroke mid i32"><use href="#newchat"/></svg></button>
      </div>
      <div class="tasks d-flex align-items-center"><svg class="stroke mid i36"><use href="#down"/></svg><span class="ml-20">In progress tasks</span><span class="ms-auto count">2 / 6</span></div>
      <div class="feed">
        <div class="step"><svg class="stroke fine i32"><use href="#brain"/></svg>Planned future architect review (4 seconds)</div>
        <p class="say g30">Excellent! I fixed the critical runtime bugs - TypeScript errors<br>dropped from 46 to 3, indicating the contractor reference and logic<br>order issues are resolved. Let me get final architect confirmation:</p>
        <div class="step g26"><svg class="stroke fine i32"><use href="#scan"/></svg>Verified runtime bug fixes, but atomicity is missing</div>
        <div class="step g16"><svg class="stroke fine i32"><use href="#brain"/></svg>Decided on atomic storage approach (6 seconds)</div>
        <p class="say g28">The architect is clear - I cannot mark tasks complete yet due to<br>missing atomic operations and decline endpoint parity. The architect<br>specifically requests storage-level compare-and-set operations.</p>
        <p class="say g32">Given the complexity of implementing database-level atomic<br>operations, let me focus on completing what we can with the current<br>architecture and clearly document the remaining limitation:</p>
        <div class="step g28"><svg class="stroke fine i32"><use href="#restart"/></svg><span>Restarted <code>Start application</code></span></div>
        <div class="step g18"><svg class="stroke fine i32"><use href="#camera"/></svg>Took a screenshot</div>
        <div class="check g18">
          <div class="meta d-flex align-items-center"><svg class="stroke mid i32"><use href="#ok"/></svg>Checkpoint made 11 minutes ago</div>
          <p class="what nowrap">Add contractor acceptance and rejection for maintenance cases</p>
          <div class="d-flex gap-3">
            <button class="plain chip"><svg class="stroke mid i24"><use href="#history"/></svg>Rollback here</button>
            <button class="plain chip"><svg class="stroke mid i24"><use href="#code"/></svg>Changes</button>
            <button class="plain chip"><svg class="stroke mid i24"><use href="#playdot"/></svg>Preview</button>
          </div>
        </div>
        <p class="say g32">I've implemented a real-time notification system and contractor<br>acceptance workflow that bridges the critical gap where AI triage<br>created tickets but contractors never knew about them. While the<br>system now works functionally, there's one technical limitation: the<br>acceptance process uses optimistic concurrency control rather than<br>true atomic database operations. Is this acceptable for MVP<br>purposes, or do you need me to implement database-level<br>compare-and-set operations first?</p>
        <button class="plain worked g34"><svg class="stroke mid i32"><use href="#gauge"/></svg>10 minutes of work<svg class="stroke fine i32 ms-auto"><use href="#down"/></svg></button>
      </div>
      <textarea class="prompt g42" aria-label="Message the agent"></textarea>
    </section>

    <section class="right flex-grow-1">
      <div class="tabs d-flex align-items-center nowrap">
        <a class="tabx on d-flex align-items-center" href="#"><svg class="stroke i28"><use href="#monitor"/></svg>Preview<svg class="stroke i20 ms-auto t-mid"><use href="#x"/></svg></a>
        <a class="tabx d-flex align-items-center" href="#"><svg class="stroke i28 t-olive"><use href="#term"/></svg>Console<svg class="stroke i20 ms-auto t-pale"><use href="#x"/></svg></a>
        <a class="tabx d-flex align-items-center" href="#"><svg class="stroke i28 t-green"><use href="#git"/></svg>Git<svg class="stroke i20 ms-auto t-pale"><use href="#x"/></svg></a>
        <button class="plain sq t-mid" aria-label="New tab"><svg class="stroke mid i28"><use href="#plus"/></svg></button>
        <button class="plain sq ms-auto" aria-label="Search"><svg class="stroke mid i32"><use href="#search"/></svg></button>
        <button class="plain sq" aria-label="Invite"><svg class="stroke mid i32"><use href="#adduser"/></svg></button>
        <button class="plain publish"><svg class="stroke mid i24"><use href="#globe"/></svg>Publish</button>
        <button class="plain sq" aria-label="Layout"><svg class="stroke mid i28"><use href="#sidebar"/></svg></button>
      </div>
      <div class="pane flex-grow-1">
        <div class="addr d-flex align-items-center">
          <button class="plain b48" aria-label="Back"><svg class="stroke i28"><use href="#left"/></svg></button>
          <button class="plain b48 t-mid" aria-label="Forward"><svg class="stroke i28"><use href="#rightarrow"/></svg></button>
          <button class="plain b48" aria-label="Reload"><svg class="stroke mid i36"><use href="#reload"/></svg></button>
          <div class="field flex-grow-1 d-flex align-items-center"><svg class="stroke mid i24"><use href="#chain"/></svg>.replit.dev<span>/student-tracking</span></div>
          <div class="tools d-flex align-items-center">
            <button class="plain b48" aria-label="Devices"><svg class="stroke fine i32"><use href="#devices"/></svg></button>
            <button class="plain theme"><svg class="stroke fine i32"><use href="#palette"/></svg>Theme</button>
            <button class="plain b48" aria-label="Tools"><svg class="stroke fine i32"><use href="#wrench"/></svg></button>
            <button class="plain b48" aria-label="Open"><svg class="stroke fine i32"><use href="#ext"/></svg></button>
          </div>
        </div>
        <div class="web">
          <header class="track-head d-flex align-items-center">
            <span class="disc"><svg class="stroke i40"><use href="#search"/></svg></span>
            <div><h1>Track Your Request</h1><p>Check the status of your maintenance requests</p></div>
          </header>
          <form class="sheet">
            <h2>Search Your Requests</h2>
            <p class="desc">Enter both your request ID and the email address you used when submitting the request</p>
            <div class="row pair">
              <div class="col-6"><label for="rid">Request ID</label><input id="rid" type="text" class="form-control" placeholder="Enter request ID (e.g., MIT-1234567890)"></div>
              <div class="col-6"><label for="mail">Email Address</label><input id="mail" type="email" class="form-control" placeholder="Enter your email address"></div>
            </div>
            <button type="button" class="plain go">Search<svg class="stroke i32"><use href="#search"/></svg></button>
          </form>
          <section class="sheet guide">
            <svg class="stroke i128"><use href="#search"/></svg>
            <h3>Track Your Maintenance Requests</h3>
            <p class="lede">Enter your request ID or email address above to see the current status of your maintenance requests.</p>
            <div class="howto"><b>How to find your request ID:</b>
              <ul><li>• Check the confirmation email sent after submitting your request</li><li>• Look for the ID on the success page after submission</li><li>• Request IDs start with "MIT-" followed by numbers</li></ul>
            </div>
          </section>
        </div>
      </div>
    </section>
  </div>
</div>
</body>
</html>
